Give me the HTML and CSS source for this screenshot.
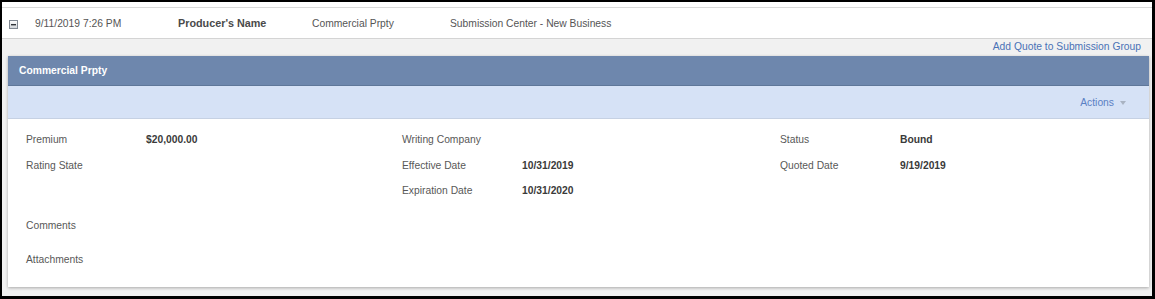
FILE: index.html
```html
<!DOCTYPE html>
<html>

<head>
    <title>Submission Quote</title>
    <link rel="stylesheet" href="styles.css">
</head>

<body>
    <div class="frame">
        <div class="top-gap"></div>
        <div class="summary-row">
            <div class="cell cell-toggle">
                <svg class="toggle-icon" width="9" height="9" viewBox="0 0 9 9">
                    <defs>
                        <linearGradient id="toggleFill" x1="0" y1="0" x2="0" y2="1">
                            <stop offset="0" stop-color="#ffffff" />
                            <stop offset="1" stop-color="#cfd3d8" />
                        </linearGradient>
                    </defs>
                    <rect x="0.5" y="0.5" width="8" height="8" fill="url(#toggleFill)" stroke="#7f8791" />
                    <rect x="2" y="4" width="5" height="1.4" fill="#2f3338" />
                </svg>
            </div>
            <div class="cell cell-date">9/11/2019 7:26 PM</div>
            <div class="cell cell-producer">Producer's Name</div>
            <div class="cell cell-line">Commercial Prpty</div>
            <div class="cell">Submission Center - New Business</div>
        </div>

        <div class="details">
            <div class="add-quote">
                <a href="#" class="link">Add Quote to Submission Group</a>
            </div>

            <div class="quote-card">
                <div class="card-header">Commercial Prpty</div>
                <div class="card-toolbar">
                    <a href="#" class="actions">Actions <span class="caret"></span></a>
                </div>
                <div class="card-body">
                    <div class="field-grid">
                        <div class="field-col">
                            <div class="field"><span class="label">Premium</span><span class="value">$20,000.00</span></div>
                            <div class="field"><span class="label">Rating State</span><span class="value"></span></div>
                        </div>
                        <div class="field-col">
                            <div class="field"><span class="label">Writing Company</span><span class="value"></span></div>
                            <div class="field"><span class="label">Effective Date</span><span class="value">10/31/2019</span></div>
                            <div class="field"><span class="label">Expiration Date</span><span class="value">10/31/2020</span></div>
                        </div>
                        <div class="field-col">
                            <div class="field"><span class="label">Status</span><span class="value">Bound</span></div>
                            <div class="field"><span class="label">Quoted Date</span><span class="value">9/19/2019</span></div>
                        </div>
                    </div>
                    <div class="extra-row"><span class="label">Comments</span></div>
                    <div class="extra-row"><span class="label">Attachments</span></div>
                </div>
            </div>
        </div>
    </div>
</body>

</html>
```

FILE: styles.css
```css
html,
body {
    margin: 0;
    padding: 0;
    background-color: #000;
}

body {
    font-family: "Liberation Sans", Arial, sans-serif;
    font-size: 10.3px;
    color: #555;
}

.frame {
    box-sizing: border-box;
    width: 1155px;
    height: 299px;
    border-style: solid;
    border-color: #000;
    border-width: 2px 3px 3px 2px;
    background-color: #f1f1f1;
    display: flex;
    flex-direction: column;
}

.top-gap {
    height: 5px;
    background-color: #fff;
}

/* ligne du resumo */
.summary-row {
    display: flex;
    align-items: center;
    height: 30px;
    background-color: #fff;
    border-top: 1px solid #d9d9d9;
    border-bottom: 1px solid #d4d4d4;
}

.cell {
    white-space: nowrap;
}

.cell-toggle {
    width: 26px;
    padding-left: 7px;
    display: flex;
    align-items: center;
    margin-top: 3px;
}

.cell-date {
    width: 143px;
}

.cell-producer {
    width: 134px;
    font-weight: bold;
    font-size: 10.8px;
    color: #4a4a4a;
}

.cell-line {
    width: 138px;
}

.details {
    flex: 1;
    padding: 0 3px 8px 6px;
}

.add-quote {
    height: 17px;
    line-height: 15px;
    text-align: right;
    padding-right: 8px;
}

.link {
    color: #4a72b6;
    text-decoration: none;
}

.quote-card {
    background-color: #fff;
    box-shadow: 0 1px 3px rgba(0, 0, 0, 0.3);
}

.card-header {
    height: 29px;
    line-height: 29px;
    padding-left: 11px;
    background-color: #6e87ad;
    border-bottom: 1px solid #5f7799;
    color: #fff;
    font-weight: bold;
}

.card-toolbar {
    height: 32px;
    background-color: #d6e2f6;
    border-bottom: 1px solid #c6d1e3;
    display: flex;
    align-items: center;
    justify-content: flex-end;
    padding-right: 23px;
}

.actions {
    color: #5a80c4;
    text-decoration: none;
    display: flex;
    align-items: center;
    gap: 6px;
    margin-top: 1px;
}

.caret {
    width: 0;
    height: 0;
    border-left: 3px solid transparent;
    border-right: 3px solid transparent;
    border-top: 4px solid #a9b3c2;
}

.card-body {
    padding: 8px 18px 14px 18px;
}

.field-grid {
    display: grid;
    grid-template-columns: 376px 378px 1fr;
}

.field,
.extra-row {
    display: flex;
    align-items: center;
    height: 25.5px;
}

.extra-row {
    margin-top: 9px;
}

.label {
    width: 120px;
    color: #585858;
}

.value {
    font-weight: bold;
    color: #3a3a3a;
}
```
